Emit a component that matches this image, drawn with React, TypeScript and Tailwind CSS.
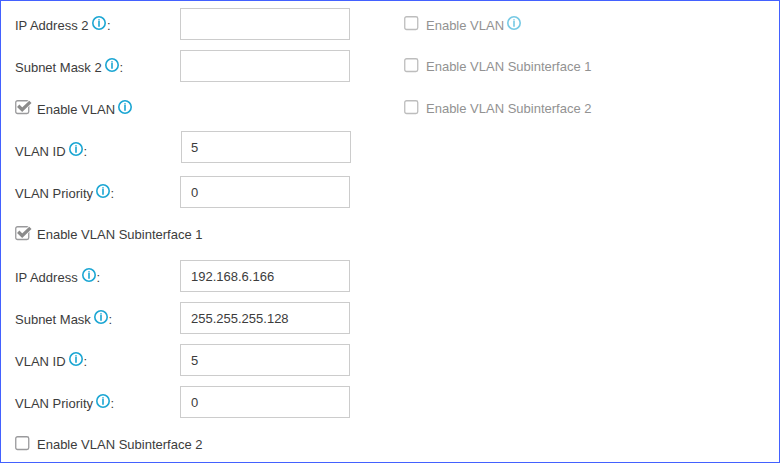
type Row = {
  kind: "field" | "check";
  label: string;
  labelWidth: string;
  info?: boolean;
  value?: string;
  checked?: boolean;
  inputClass?: string;
  textClass?: string;
  colonClass?: string;
};

const leftRows: Row[] = [
  { kind: "field", label: "IP Address 2", labelWidth: "w-[76px]", info: true, value: "", colonClass: "ml-px" },
  { kind: "field", label: "Subnet Mask 2", labelWidth: "w-[89px]", info: true, value: "" },
  { kind: "check", label: "Enable VLAN", labelWidth: "w-[80px]", info: true, checked: true, textClass: "pt-[3px]" },
  { kind: "field", label: "VLAN ID", labelWidth: "w-[53px]", info: true, value: "5", inputClass: "ml-px mb-[6px] px-[9px]" },
  { kind: "field", label: "VLAN Priority", labelWidth: "w-[80px]", info: true, value: "0" },
  { kind: "check", label: "Enable VLAN Subinterface 1", labelWidth: "w-[180px]", checked: true, textClass: "pt-px" },
  { kind: "field", label: "IP Address", labelWidth: "w-[66px]", info: true, value: "192.168.6.166" },
  { kind: "field", label: "Subnet Mask", labelWidth: "w-[78px]", info: true, value: "255.255.255.128" },
  { kind: "field", label: "VLAN ID", labelWidth: "w-[53px]", info: true, value: "5" },
  { kind: "field", label: "VLAN Priority", labelWidth: "w-[80px]", info: true, value: "0" },
  { kind: "check", label: "Enable VLAN Subinterface 2", labelWidth: "w-[180px]", textClass: "pt-px" },
];

const rightRows: Row[] = [
  { kind: "check", label: "Enable VLAN", labelWidth: "w-[80px]", info: true, textClass: "pt-[3px]" },
  { kind: "check", label: "Enable VLAN Subinterface 1", labelWidth: "w-[180px]", textClass: "pt-px" },
  { kind: "check", label: "Enable VLAN Subinterface 2", labelWidth: "w-[180px]", textClass: "pt-px" },
];

function InfoIcon() {
  return (
    <svg className="mb-[2px] h-[14px] w-[14px] shrink-0" viewBox="0 0 14 14" fill="none">
      <circle cx="7" cy="7" r="6.2" stroke="#1ba6d3" strokeWidth="1.6" />
      <path d="M7 3.2v1.2M7 4.9v5.8" stroke="#1ba6d3" strokeWidth="1.6" />
    </svg>
  );
}

function Checkbox({ checked, disabled }: { checked?: boolean; disabled?: boolean }) {
  return (
    <svg className="mb-[2px] h-[16px] w-[18px] shrink-0" viewBox="0 0 18 16" fill="none">
      <rect x="0.75" y="1.75" width="13" height="12.75" rx="1.8" stroke={disabled ? "#bdbdbd" : "#9a9a9c"} strokeWidth="1.3" />
      {checked && (
        <>
          <path d="M10.5 5.8 14.8 1.5M11.5 8.4 15.5 4.2" stroke="#fff" strokeWidth="2" />
          <path d="M3.2 6.8 7.2 10.7 15.4 2.9" stroke="#8b8b8b" strokeWidth="3.3" />
        </>
      )}
    </svg>
  );
}

function FormRow({ row, disabled }: { row: Row; disabled?: boolean }) {
  if (row.kind === "check") {
    return (
      <label className={`flex h-[42px] shrink-0 items-center ${disabled ? "text-[#929292]" : ""}`}>
        <Checkbox checked={row.checked} disabled={disabled} />
        <span className={`ml-1 shrink-0 whitespace-nowrap ${row.labelWidth} ${row.textClass ?? ""}`}>{row.label}</span>
        {row.info && (
          <span className={`ml-px flex ${disabled ? "opacity-60" : ""}`}>
            <InfoIcon />
          </span>
        )}
      </label>
    );
  }
  return (
    <div className="flex h-[42px] shrink-0 items-center">
      <div className="flex w-[165px] shrink-0 items-center">
        <span className={`shrink-0 whitespace-nowrap pt-[3px] ${row.labelWidth}`}>{row.label}</span>
        <span className="ml-px flex">
          <InfoIcon />
        </span>
        <span className={`pt-[3px] ${row.colonClass ?? "ml-[0.5px]"}`}>:</span>
      </div>
      <input
        className={`h-8 w-[170px] shrink-0 border border-[#cccccc] bg-white outline-none ${row.inputClass ?? "px-[10px]"}`}
        defaultValue={row.value}
      />
    </div>
  );
}

export default function App() {
  return (
    <main className="flex h-[463px] w-[780px] overflow-hidden border border-[#4361ff] bg-white pt-[2px] pl-[14px] font-['Liberation_Sans',Arial,sans-serif] text-[13px] leading-[18px] text-[#3c3c3c]">
      <section className="flex w-[389px] shrink-0 flex-col">
        {leftRows.map((row, i) => (
          <FormRow key={i} row={row} />
        ))}
      </section>
      <section className="flex flex-col">
        {rightRows.map((row, i) => (
          <FormRow key={i} row={row} disabled />
        ))}
      </section>
    </main>
  );
}
